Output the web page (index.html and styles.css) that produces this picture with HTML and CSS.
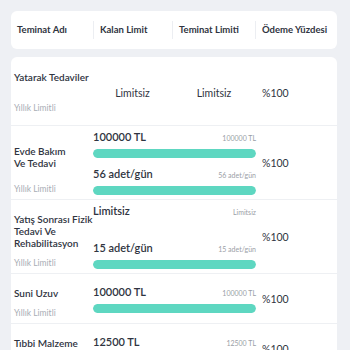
FILE: index.html
```html
<!DOCTYPE html>
<html lang="tr">
<head>
  <meta charset="UTF-8">
  <meta name="viewport" content="width=device-width, initial-scale=1.0">
  <title>Teminatlar</title>
  <link rel="stylesheet" href="styles.css">
</head>
<body>
  <!-- Table header -->
  <div class="table-head">
    <div class="th">Teminat Adı</div>
    <div class="th">Kalan Limit</div>
    <div class="th">Teminat Limiti</div>
    <div class="th">Ödeme Yüzdesi</div>
  </div>

  <!-- Table body -->
  <div class="table-body">
    <div class="row simple">
      <div class="cover">
        <div class="cover-name">Yatarak Tedaviler</div>
        <div class="cover-note">Yıllık Limitli</div>
      </div>
      <div class="cell-center">Limitsiz</div>
      <div class="cell-center">Limitsiz</div>
      <div class="pct">%100</div>
    </div>

    <div class="row">
      <div class="cover">
        <div class="cover-name">Evde Bakım<br>Ve Tedavi</div>
        <div class="cover-note">Yıllık Limitli</div>
      </div>
      <div class="limits">
        <div class="limit">
          <div class="limit-top"><span class="remain">100000 TL</span><span class="total">100000 TL</span></div>
          <div class="bar"><div class="fill" style="width: 100%"></div></div>
        </div>
        <div class="limit">
          <div class="limit-top"><span class="remain">56 adet/gün</span><span class="total">56 adet/gün</span></div>
          <div class="bar"><div class="fill" style="width: 100%"></div></div>
        </div>
      </div>
      <div class="pct">%100</div>
    </div>

    <div class="row">
      <div class="cover">
        <div class="cover-name">Yatış Sonrası Fizik Tedavi Ve Rehabilitasyon</div>
        <div class="cover-note">Yıllık Limitli</div>
      </div>
      <div class="limits">
        <div class="limit">
          <div class="limit-top"><span class="remain">Limitsiz</span><span class="total">Limitsiz</span></div>
          <div class="bar empty"></div>
        </div>
        <div class="limit">
          <div class="limit-top"><span class="remain">15 adet/gün</span><span class="total">15 adet/gün</span></div>
          <div class="bar"><div class="fill" style="width: 100%"></div></div>
        </div>
      </div>
      <div class="pct">%100</div>
    </div>

    <div class="row">
      <div class="cover">
        <div class="cover-name">Suni Uzuv</div>
        <div class="cover-note">Yıllık Limitli</div>
      </div>
      <div class="limits">
        <div class="limit">
          <div class="limit-top"><span class="remain">100000 TL</span><span class="total">100000 TL</span></div>
          <div class="bar"><div class="fill" style="width: 100%"></div></div>
        </div>
      </div>
      <div class="pct">%100</div>
    </div>

    <div class="row">
      <div class="cover">
        <div class="cover-name">Tıbbi Malzeme</div>
        <div class="cover-note">Yıllık Limitli</div>
      </div>
      <div class="limits">
        <div class="limit">
          <div class="limit-top"><span class="remain">12500 TL</span><span class="total">12500 TL</span></div>
          <div class="bar"><div class="fill" style="width: 100%"></div></div>
        </div>
      </div>
      <div class="pct">%100</div>
    </div>
  </div>
</body>
</html>
```

FILE: styles.css
```css
/* General */
body {
  font-family: 'Lato', 'Noto Sans', sans-serif;
  background-color: #eef0f4;
  color: #2f3441;
  margin: 0;
  padding: 11px 13px 20px 11px;
}

/* Header card */
.table-head {
  display: grid;
  grid-template-columns: 82px 79px 83px 1fr;
  align-items: center;
  height: 38px;
  background-color: #ffffff;
  border-radius: 6px;
  margin-bottom: 8px;
}

.th {
  font-size: 9.5px;
  font-weight: 700;
  padding-left: 6px;
  line-height: 18px;
  border-left: 1px solid #eceef2;
  white-space: nowrap;
}

.th:first-child {
  border-left: none;
}

/* Body card */
.table-body {
  background-color: #ffffff;
  border-radius: 6px 6px 0 0;
}

.row {
  display: grid;
  grid-template-columns: 82px 163px 1fr;
  padding: 4px 0;
  border-bottom: 1px solid #eef0f3;
}

.row.simple {
  grid-template-columns: 82px 79px 84px 1fr;
  padding: 14px 0 11px;
}

.cover {
  display: flex;
  flex-direction: column;
  padding-left: 3px;
  min-height: 41px;
}

.row.simple .cover {
  min-height: 43px;
  justify-content: space-between;
}

.cover-name {
  flex: 1;
  display: flex;
  align-items: center;
  font-size: 10px;
  font-weight: 600;
  line-height: 12px;
}

.row.simple .cover-name {
  flex: none;
}

.cover-note {
  font-size: 8.5px;
  color: #a9adb5;
  line-height: 12px;
}

.cell-center {
  display: flex;
  align-items: center;
  justify-content: center;
  font-size: 10.5px;
}

.pct {
  display: flex;
  align-items: center;
  padding-left: 6px;
  font-size: 10.5px;
}

/* Limits with progress bars */
.limits {
  display: flex;
  flex-direction: column;
  justify-content: center;
  gap: 9px;
}

.limit-top {
  display: flex;
  justify-content: space-between;
  align-items: baseline;
  height: 17px;
}

.remain {
  font-size: 11px;
  font-weight: 600;
}

.total {
  font-size: 7px;
  color: #9a9ea6;
}

.bar {
  height: 9px;
  margin-top: 2px;
  border-radius: 5px;
  background-color: #e6f7f4;
  overflow: hidden;
}

.bar.empty {
  background-color: transparent;
}

.fill {
  height: 100%;
  background-color: #5ed7c1;
  border-radius: 5px;
}
```
